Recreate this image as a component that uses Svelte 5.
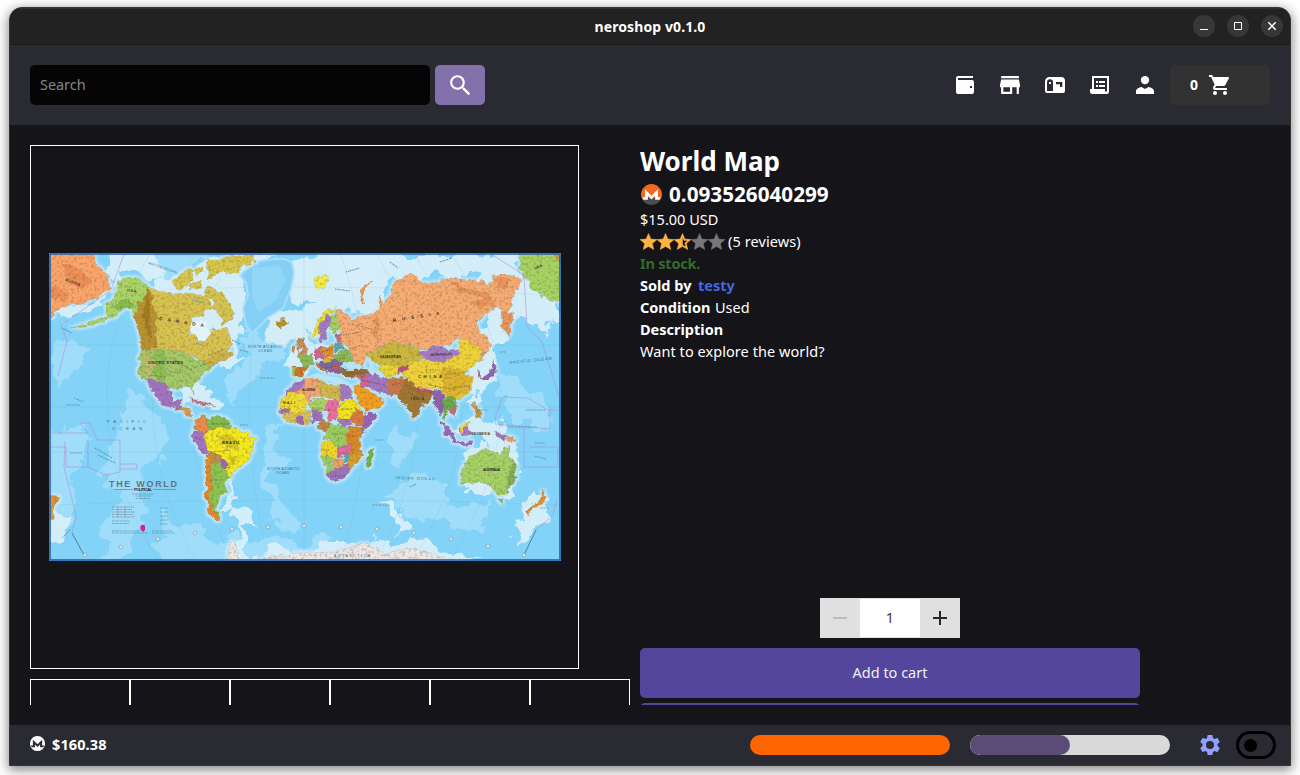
<script>
  const thumbs = [1, 2, 3, 4, 5, 6];
  let quantity = $state(1);
  const slider = 50;

  const star = 'M12 17.27L18.18 21L16.54 13.97L22 9.24L14.81 8.62L12 2L9.19 8.62L2 9.24L7.45 13.97L5.82 21Z';
  const starHalf = 'M12 15.4V6.1L13.71 10.13L18.09 10.5L14.77 13.39L15.76 17.67M22 9.24L14.81 8.63L12 2L9.19 8.63L2 9.24L7.45 13.97L5.82 21L12 17.27L18.18 21L16.54 13.97L22 9.24Z';
  const stars = [
    { d: star, fill: '#ffb344' },
    { d: star, fill: '#ffb344' },
    { d: starHalf, fill: '#ffb344' },
    { d: star, fill: '#777777' },
    { d: star, fill: '#777777' }
  ];

  const shallow = [
    'M110 248H150L165 275L150 286L138 276L115 282L104 305L85 315L60 322L50 318L60 305L98 298L110 285Z',
    'M165 276L205 262L250 250H275L240 275L246 300L245 330L236 350L240 362L222 366L232 345L226 328L205 345L190 330L193 318L170 294L152 288Z',
    'M292 262L330 250H520V275L535 290L562 302V322L540 328L512 318L500 345L490 370L470 385L480 350L478 325L495 305L505 280L440 282L395 285L378 310L345 312L325 305L300 300L290 285Z',
    'M262 318L300 305L335 305L320 330L300 335L285 345L265 335Z',
    'M292 335L312 335L325 345L335 360L300 368L290 360Z',
    'M218 512L250 508L262 520L240 528L228 560H245L250 535L225 505L232 470L226 478Z',
    'M445 425L475 442L520 450L515 440L500 425L470 420Z',
    'M462 452L512 440L522 470L508 500L490 498L480 488L461 488Z',
    'M385 500L395 505L408 525L398 535Z',
    'M538 490L552 500L540 530L510 540L525 515Z',
    'M40 512L75 515L58 540H40Z',
    'M178 384H200L218 402L216 408L185 404Z',
    'M478 365L500 350L498 385L470 400L465 385Z',
    'M240 565L270 552L330 545L370 537L440 548L480 565Z'
  ];
  const currents = [
    'M130 390L160 420L165 450L140 480L150 510L120 565H95L118 500L100 470L120 430Z',
    'M160 510L200 530L260 545L330 535L300 565H160Z',
    'M285 405L275 430L290 460L270 480L295 520L280 535L262 490L265 440Z',
    'M390 490L430 470L455 500L490 505L480 530L430 525L400 510Z',
    'M400 425L408 445L398 470L394 440Z',
    'M500 370L540 385L555 420L520 425L500 400Z',
    'M225 375L265 345L285 340L250 385L232 405Z',
    'M50 340L60 335L90 345L72 375L55 385Z',
    'M140 248H215L180 270L165 284L150 272ZM40 425L90 430L75 470L80 520L60 535L40 500Z',
    'M325 248L370 248L382 270L355 300L338 306Z',
    'M245 330L270 335L285 360L250 365Z'
  ];

  const land = [
    ['#fca56b', 'M40 244H88L96 262L107 274L109 287L98 297L80 303L60 308L55 315L40 322Z'],
    ['#f08f56', 'M62 262L80 270L92 283L84 288L66 278ZM50 285L70 294L62 300L48 297Z'],
    ['#a9d566', 'M118 282L137 277L152 288L143 298L136 315L128 307L113 317L93 325L70 328L90 323L107 316L104 305L115 298Z'],
    ['#86bd50', 'M112 308L124 300L134 303L132 308L120 309Z'],
    ['#d8c350', 'M152 288L173 295L187 292L207 298L213 308L193 320L190 330L200 342L206 340L213 328L227 328L233 345L220 355L203 362L197 358L183 352L143 348L140 338L135 313L143 298Z'],
    ['#bb932f', 'M150 288L153 302L157 318L156 347L143 348L140 335L135 313L143 298Z'],
    ['#a57a1f', 'M147 293L151 303L149 322L153 340L147 334L143 312Z'],
    ['#d9c74c', 'M172 283L187 270L195 271L192 280L180 290ZM205 262L227 257L253 255L255 260L237 272L228 276L222 272L209 278ZM188 284L200 281L203 287L190 290ZM196 268L202 266L203 273L197 276Z'],
    ['#d6c452', 'M207 286L222 292L232 305L232 318L223 325L219 315L210 310L216 302L203 296Z'],
    ['#a3c969', 'M143 348L183 352L197 360L213 358L226 351L233 353L213 367L200 378L193 388L195 395L190 387L168 388L165 383L147 380L138 373L140 358Z'],
    ['#8dbf55', 'M156 349H162L168 375L160 383L154 370Z'],
    ['#bfc06a', 'M143 355L152 352L154 375L146 374Z'],
    ['#d0b348', 'M203 362L226 350L235 354L222 361L208 368Z'],
    ['#a273c6', 'M145 380L165 383L170 392L172 402L182 400L182 407L172 409L160 402L153 391Z'],
    ['#d79a47', 'M178 405L187 409L194 417L187 416Z'],
    ['#c66f95', 'M188 398L203 401L216 407L207 406Z'],
    ['#b9962d', 'M275 321L285 319L289 324L281 328Z'],
    ['#f7ef3c', 'M314 278L322 276L328 278L324 286L317 290Z'],
    ['#e98c4d', 'M195 420L202 415L210 418L211 428L203 437L194 430Z'],
    ['#86bd4c', 'M205 417L225 418L234 426L229 432L210 430Z'],
    ['#f5e91f', 'M203 436L217 426L240 430L255 438L253 447L247 463L237 467L230 479L224 466L214 455L203 444Z'],
    ['#dbc526', 'M218 436L234 437L238 446L228 448ZM228 455L238 457L233 466Z'],
    ['#a276c7', 'M192 434L202 430L206 443L209 455L203 452L192 442Z'],
    ['#c28f47', 'M209 450L220 455L224 462L213 466L208 459Z'],
    ['#8cc453', 'M211 462L222 463L230 479L224 483L227 492L218 500L217 512L221 518L212 514L209 500Z'],
    ['#9a68bd', 'M219 458H225L229 468L224 470Z'],
    ['#e58a2b', 'M206 454L211 462L210 500L216 515L222 519L216 521L209 513L206 495Z'],
    ['#f4a573', 'M295 388L304 380L320 378L321 394L308 401L295 394Z'],
    ['#a177c4', 'M290 387L304 379L302 387L285 396Z'],
    ['#f2dd33', 'M282 397L295 391L307 400L305 413L292 416L282 410Z'],
    ['#d9bf55', 'M281 411L296 414L309 412L312 423L297 425L286 420Z'],
    ['#9f68bb', 'M282 409L290 410L288 415L283 414ZM296 415L302 415L302 425L297 424Z'],
    ['#d2b84d', 'M319 379L330 385L340 385V401L321 395Z'],
    ['#a47bc7', 'M340 384L350 386L353 399H340Z'],
    ['#aad365', 'M309 402L323 396L327 402L322 413L311 413Z'],
    ['#ec6f9f', 'M327 400L339 401L337 419L329 421L325 411Z'],
    ['#f2e522', 'M339 400H355L360 408L352 419H338Z'],
    ['#9f70c2', 'M310 411L323 412L322 422L313 422Z'],
    ['#bd8749', 'M321 420L328 421L331 427L323 431L318 425Z'],
    ['#a672c5', 'M338 419L353 419L350 424L340 425Z'],
    ['#dc7a3f', 'M355 407L364 413L372 418L366 426H355L351 418Z'],
    ['#9763bb', 'M366 414L377 414L368 428L361 434L362 428Z'],
    ['#9bce60', 'M329 424L347 425L346 440L348 449H335L330 440L323 438Z'],
    ['#d98928', 'M348 425L363 428L360 438L362 455L350 454L346 440Z'],
    ['#f0d629', 'M321 440L333 442L338 450L335 459L321 457Z'],
    ['#e36aa2', 'M337 449L350 443L351 454L337 456Z'],
    ['#9dcb63', 'M321 457H334L333 474L327 473Z'],
    ['#e5a260', 'M335 458L343 457L344 467L334 470Z'],
    ['#49adaf', 'M343 455L351 453L350 463L344 463Z'],
    ['#d99e2d', 'M351 454L362 452L356 462L350 471L348 465Z'],
    ['#9d72c0', 'M327 474L335 470L344 465L350 466L349 474L338 481L330 480Z'],
    ['#72b747', 'M375 447L374 459L369 468L366 463L369 452Z'],
    ['#ca8c58', 'M296 341L302 337L304 345L307 354L298 356L301 350ZM293 346L297 345L296 351L293 351Z'],
    ['#cd7627', 'M293 366L308 367L304 377H294Z'],
    ['#9fc45a', 'M293 367L296 367L295 376L292 375Z'],
    ['#8bbb55', 'M298 356L311 354L314 365L305 368Z'],
    ['#f1e335', 'M312 337L319 318L328 309L337 310L326 316L320 334Z'],
    ['#a279c4', 'M319 341L320 325L327 314L332 320L327 329L326 338Z'],
    ['#a7cf69', 'M331 316L337 311L340 327L335 334L330 327Z'],
    ['#dc6191', 'M314 347L322 346L323 359L314 359Z'],
    ['#dd8f37', 'M322 348L334 345L336 355L323 357Z'],
    ['#57a9ae', 'M335 344L343 342L345 351L336 352Z'],
    ['#8bbb53', 'M335 354L349 351L355 361L344 363L334 362Z'],
    ['#7c66a5', 'M321 361L329 358L342 363L340 371L330 374L321 366Z'],
    ['#c05775', 'M332 366L340 364L341 369L334 371Z'],
    ['#d9b73e', 'M323 357L333 357L331 363L324 361Z'],
    ['#9b6c2c', 'M340 369L362 369L371 373L366 378L345 377Z'],
    ['#c2793d', 'M316 362L322 366L328 375L320 369Z'],
    ['#c86b86', 'M335 335L342 334L343 342L336 343Z'],
    ['#f7ac73', 'M337 310L350 315L348 320L367 315L378 310V297L383 305L390 295L395 282L410 273L417 277L420 283L440 282L450 278L477 280L490 285L493 275L513 275L523 280L513 295V305L508 315V335L502 325V308L493 307L477 322L480 333L488 337L492 345L482 360L473 350L460 338L443 346L422 348L393 342L368 352L365 368L355 360L344 343L340 332Z'],
    ['#ee9458', 'M450 280L460 287L485 293L492 300L478 296L458 292ZM376 316L380 325L377 345L373 328ZM505 310L512 315L509 336L503 325ZM470 302L486 299L496 304L480 308ZM492 278L510 279L505 290Z'],
    ['#ee9555', 'M371 282L365 288L362 297L365 304L361 301L360 291L365 284Z'],
    ['#cdb83e', 'M366 353L393 342L420 348L424 358L407 365L382 368L369 359Z'],
    ['#ead738', 'M379 365L397 363L397 376L388 378L380 372Z'],
    ['#a57bc6', 'M419 352L433 346L443 348L461 349L457 358L443 363L427 360Z'],
    ['#efd338', 'M397 372L411 362L423 360L443 363L461 352L459 341L465 338L480 348L482 359L467 370L463 372L473 378L470 392L460 400L443 398L440 388L417 388L408 379Z'],
    ['#dfb52e', 'M443 368L463 370L471 380L467 393L452 398L443 391Z'],
    ['#bd4d82', 'M396 367L408 364L410 370L399 374Z'],
    ['#a17633', 'M396 383L408 378L418 389L438 392L433 398L423 405L414 420L407 407L398 398Z'],
    ['#cf426a', 'M415 387L434 391L432 394L418 391Z'],
    ['#a377c6', 'M363 375L374 373L388 379L390 393L379 393L368 385Z'],
    ['#d3629d', 'M358 377L366 376L370 387L360 386Z'],
    ['#cc7949', 'M387 379L404 377L401 391L391 396Z'],
    ['#f39d22', 'M353 387L362 384L375 396L384 400L376 409L366 413L358 401Z'],
    ['#8f61b5', 'M434 391L441 389L444 402L440 416L435 403Z'],
    ['#6daa49', 'M441 400L452 396L458 407L455 416L447 411L445 421Z'],
    ['#d8618b', 'M449 410L456 407L455 415L450 415Z'],
    ['#9b68bc', 'M440 422L449 427L458 440L473 442L470 445L454 442L445 433Z'],
    ['#ad75c7', 'M458 430L468 425L470 435L461 436Z'],
    ['#f0d73a', 'M459 429L470 421L469 427L461 433Z'],
    ['#c69342', 'M473 402L478 407L482 418L476 418Z'],
    ['#a275be', 'M494 433L505 434L504 442Z'],
    ['#f0a06c', 'M504 434L517 441L509 444Z'],
    ['#9464b2', 'M482 377L491 372L494 361L497 368L493 376L484 381Z'],
    ['#c54e80', 'M477 369L482 374L480 377Z'],
    ['#a4d265', 'M463 462L473 455L485 448L497 450L500 457L506 445L512 460L517 467L515 480L507 493H496L488 483L473 482L461 485Z'],
    ['#82b44f', 'M512 462L517 468L514 482L507 492L509 480Z'],
    ['#87bd55', 'M498 499H503L501 505Z'],
    ['#e0942f', 'M543 490L547 497L541 503L528 515L525 513L539 501ZM52 494L58 497L54 507L53 520L48 521V500Z'],
    ['#a6d463', 'M518 244H570V306L547 299L533 288L520 272Z'],
    ['#c99a32', 'M545 244H570V276Z'],
    ['#ede8e8', 'M240 568L272 557L298 553L333 552L363 543L375 547L380 553L413 549L440 555L455 568ZM229 540L236 547L241 568H229Z']
  ];

  const labels = [
    [159, 320, 'C  A  N  A  D  A', 4.6, 45, 9, 'b'],
    [148, 364, 'UNITED STATES', 4, 35, 0, 'b'],
    [393, 322, 'R  U  S  S  I  A', 4.6, 47, -9, 'b'],
    [431, 356, 'MONGOLIA', 3.5, 21, -3, 'b'],
    [418, 378, 'C H I N A', 4, 24, 0, 'b'],
    [222, 444, 'BRAZIL', 4, 18, 0, 'b'],
    [483, 471, 'AUSTRALIA', 3.6, 17, 0, 'b'],
    [127, 291, 'U.S.A.', 3.5, 10, 8, 'b'],
    [65, 281, 'RUSSIA', 4, 16, 20, 'b'],
    [107, 423, 'P A C I F I C', 4.2, 39, 0, ''],
    [112, 430, 'O C E A N', 4.2, 30, 0, ''],
    [510, 364, 'PACIFIC OCEAN', 4.2, 42, -6, ''],
    [395, 479, 'INDIAN OCEAN', 4.2, 40, 2, ''],
    [248, 348, 'NORTH ATLANTIC', 3.4, 34, 0, ''],
    [258, 352, 'OCEAN', 3.4, 14, 0, ''],
    [267, 470, 'SOUTH ATLANTIC', 3.4, 33, 0, ''],
    [276, 474, 'OCEAN', 3.4, 13, 0, ''],
    [148, 264, 'ARCTIC OCEAN', 3.6, 30, 19, ''],
    [334, 557, 'ANTARCTICA', 3.4, 36, 0, ''],
    [380, 358, 'KAZAKHSTAN', 3, 21, 0, 'b'],
    [470, 435, 'INDONESIA', 3, 20, 0, 'b'],
    [411, 400, 'INDIA', 3.2, 13, 0, 'b'],
    [302, 391, 'ALGERIA', 3, 13, 0, 'b'],
    [283, 404, 'MALI', 3, 12, 0, 'b'],
    [535, 270, 'U.S.A.', 3.5, 9, -28, 'b']
  ];
  const markers = [[85,555],[121,547],[158,539],[195,533],[232,529],[268,527],[304,526],[341,527],[377,529],[414,533],[451,539],[488,546],[524,555]];
</script>

{#snippet monero(size, top, bottom, mark)}
  <svg width={size} height={size} viewBox="1 1 22 22">
    <path d="M12 1A11 11 0 0 0 1.6 15.5H22.4A11 11 0 0 0 12 1Z" fill={top} />
    <path d="M1.6 15.5A11 11 0 0 0 22.4 15.5Z" fill={bottom} />
    <path d="M5.2 6.6L12 13.2L18.8 6.6V14.8H21.8L20.6 17.6H15.8V13.4L12 17.2L8.2 13.4V17.6H3.4L2.2 14.8H5.2Z" fill={mark} />
  </svg>
{/snippet}

<div class="desktop">
  <div class="window">
    <div class="titlebar">
      <span></span>
      <h1>neroshop v0.1.0</h1>
      <div class="controls">
        <button aria-label="Minimize"><svg width="22" height="22"><path d="M7 14.5H15" /></svg></button>
        <button aria-label="Maximize"><svg width="22" height="22"><path d="M7.5 7.5H14.5V14.5H7.5Z" /></svg></button>
        <button aria-label="Close"><svg width="22" height="22"><path d="M7.3 7.3L14.7 14.7M14.7 7.3L7.3 14.7" stroke-width="1.5" /></svg></button>
      </div>
    </div>

    <header>
      <div class="search">Search</div>
      <button class="find" aria-label="Find">
        <svg width="22" height="22" viewBox="2 2 19.5 19.5" fill="#fff"><path d="M9.5,3A6.5,6.5 0 0,1 16,9.5C16,11.11 15.41,12.59 14.44,13.73L14.71,14H15.5L20.2,18.7Q20.9,19.4 20.2,20.2Q19.4,20.9 18.6,20.2L14,15.5V14.71L13.73,14.44C12.59,15.41 11.11,16 9.5,16A6.5,6.5 0 0,1 3,9.5A6.5,6.5 0 0,1 9.5,3M9.5,4.9C7,4.9 4.9,7 4.9,9.5C4.9,12 7,14.1 9.5,14.1C12,14.1 14.1,12 14.1,9.5C14.1,7 12,4.9 9.5,4.9Z" /></svg>
      </button>
      <nav>
        <svg viewBox="0 0 24 24"><path fill-rule="evenodd" d="M5 3H20V5H5V7H19a2 2 0 0 1 2 2V19a2 2 0 0 1-2 2H5a2 2 0 0 1-2-2V5a2 2 0 0 1 2-2ZM17 13V15H19V13Z" /></svg>
        <svg viewBox="1.2 1.2 21.6 21.6"><path d="M12,18H6V14H12M21,14V12L20,7H4L3,12V14H4V20H14V14H18V20H20V14M20,4H4V6H20V4Z" /></svg>
        <svg viewBox="0 0 24 24"><path fill-rule="evenodd" d="M6.5 4H18a4 4 0 0 1 4 4V18a2 2 0 0 1-2 2H4a2 2 0 0 1-2-2V8.5A4.5 4.5 0 0 1 6.5 4ZM7 6.3A3 3 0 0 0 4 9.3V18H10V9.3A3 3 0 0 0 7 6.3ZM6 9H8V11H6ZM13 9V11.2H17V14H19.3V9Z" /></svg>
        <svg viewBox="0 0 24 24"><path fill-rule="evenodd" d="M4 3H21V18.5A2.5 2.5 0 0 1 18.5 21H4.5A2.5 2.5 0 0 1 2 18.5V16H4ZM6 5V16H17V18.5H19V5Z" /><path d="M8 8H10V10H8ZM11 8H17V10H11ZM8 12H10V14H8ZM11 12H17V14H11Z" /></svg>
        <svg viewBox="0 0 24 24"><circle cx="12" cy="7.1" r="4.2" /><path d="M3 21V18.5C3 16 5.7 14.6 8.5 14.1L12 16L15.5 14.1C18.3 14.6 21 16 21 18.5V21Z" /></svg>
      </nav>
      <button class="cart">
        <b>0</b>
        <svg width="24" height="24" viewBox="0 0 24 24" fill="#fff"><path d="M17,18C15.89,18 15,18.89 15,20A2,2 0 0,0 17,22A2,2 0 0,0 19,20C19,18.89 18.1,18 17,18M1,2V4H3L6.6,11.59L5.24,14.04C5.09,14.32 5,14.65 5,15A2,2 0 0,0 7,17H19V15H7.42A0.25,0.25 0 0,1 7.17,14.75C7.17,14.7 7.18,14.66 7.2,14.63L8.1,13H15.55C16.3,13 16.96,12.58 17.3,11.97L20.88,5.5C20.95,5.34 21,5.17 21,5A1,1 0 0,0 20,4H5.21L4.27,2M7,18C5.89,18 5,18.89 5,20A2,2 0 0,0 7,22A2,2 0 0,0 9,20C9,18.89 8.1,18 7,18Z" /></svg>
      </button>
    </header>

    <main>
      <div class="gallery">
        <div class="frame">
          <svg class="map" width="512" height="308" viewBox="49 253 512 308">
            <defs>
              <filter id="coast" filterUnits="userSpaceOnUse" x="39" y="243" width="532" height="328" color-interpolation-filters="sRGB">
                <feTurbulence type="fractalNoise" baseFrequency="0.13" numOctaves="4" seed="4" result="n" />
                <feDisplacementMap in="SourceGraphic" in2="n" scale="8" xChannelSelector="R" yChannelSelector="G" result="d" />
                <feMorphology in="d" operator="dilate" radius="2" result="grown" />
                <feGaussianBlur in="grown" stdDeviation="1.2" result="soft" />
                <feFlood flood-color="#d6edf8" flood-opacity=".7" />
                <feComposite in2="soft" operator="in" result="shelf" />
                <feTurbulence type="fractalNoise" baseFrequency="0.35" numOctaves="3" seed="11" />
                <feColorMatrix values="0 0 0 0 0.42  0 0 0 0 0.36  0 0 0 0 0.22  3 0 0 0 -1.4" />
                <feComponentTransfer><feFuncA type="linear" slope=".34" /></feComponentTransfer>
                <feComposite in2="d" operator="in" result="relief" />
                <feMerge><feMergeNode in="shelf" /><feMergeNode in="d" /><feMergeNode in="relief" /></feMerge>
              </filter>
              <filter id="sea" filterUnits="userSpaceOnUse" x="39" y="243" width="532" height="328" color-interpolation-filters="sRGB">
                <feTurbulence type="fractalNoise" baseFrequency="0.045" numOctaves="4" seed="7" result="n" />
                <feDisplacementMap in="SourceGraphic" in2="n" scale="34" xChannelSelector="R" yChannelSelector="G" />
              </filter>
            </defs>
            <rect x="49" y="253" width="512" height="308" fill="#83d2f8" />
            <g fill="#a0ddfa" filter="url(#sea)">{#each currents as d}<path {d} />{/each}</g>
            <g fill="#dcf0fa" opacity=".9" filter="url(#sea)">{#each shallow as d}<path {d} />{/each}</g>
            <g fill="none" stroke="#59bba9" stroke-width=".4" opacity=".4">
              <path d="M50 296Q305 278 560 296M50 345H560M50 407H560M50 452H560M50 505Q305 495 560 505M304 254V560M268 254Q230 400 268 560M232 254Q150 400 232 560M195 254Q110 400 195 560M150 254Q60 400 158 560M341 254Q390 400 341 560M377 254Q460 400 377 560M414 254Q510 400 414 560M451 254Q550 400 451 560" />
            </g>
            <path d="M248 268L255 262L273 259L285 259L292 263L294 274L291 288L283 308L267 318L260 326L252 333L246 325L243 308L248 295L246 283L240 275Z" fill="#84cff5" stroke="#a7dff8" stroke-width="2" />
            <path d="M252 268L280 266L286 280L276 300L258 312L252 295Z" fill="#92d7f8" />
            <g filter="url(#coast)">{#each land as [fill, d]}<path {d} {fill} stroke="#76705a" stroke-opacity=".35" stroke-width=".5" />{/each}</g>
            <path d="M191 323L200 320L207 321L206 328L211 333L205 341L199 340L196 335L190 331Z" fill="#e4f3fb" />
            <path d="M367 360L371 358L372 364L376 369L373 376L369 372L370 366ZM345 366L350 362L354 365L360 364L362 368L350 369ZM310 375L318 373L327 376L338 377L350 383L340 384L330 381L320 379Z" fill="#b9e4f6" />
            <g fill="none" stroke="#b18bd0" stroke-width=".7" opacity=".8">
              <path d="M124 254L111 290L61 325L67 341L58 376M51 433H88L80 423H90L97 440H120V472L106 475L88 467V441M50 447H66V467H88M120 464H137V469H121M65 441L64 467L76 515L72 533" />
              <path d="M491 254L524 275L527 326L542 342L560 400M503 397L528 398L548 410H558M503 397L496 414L495 424L550 429V407M524 427V467H558V447H530M557 500L553 515L536 530" />
            </g>
            <path d="M72 533L84 555M536 530L524 555" stroke="#3c5e71" stroke-width=".7" fill="none" />
            <path d="M66 405H80M74 398L84 402M70 453H82M95 448L112 458M98 455L115 463M62 328L72 333M205 408H212M240 425H248M192 300L205 303M440 262L452 258M390 262L398 268M346 272L360 268M335 289L350 291M500 352H506M508 427H537M526 410H545M475 410H488M535 443H545M535 456L546 459M410 487L416 484M375 440H383M372 505H390M505 477H515M540 508H549M355 455L362 453M480 355L486 352M196 343L205 346M232 340L240 344M260 378H274M240 350L248 352M70 530L62 538" stroke="#5e93a5" stroke-width="1.1" stroke-dasharray="1.4 .8 .8 .6" fill="none" />
            <path d="M208 355L224 350M170 372H185M200 366L212 362M150 375L165 377M174 360L192 370M330 360L345 358M322 352L332 349M345 350L362 345M343 335L362 332M352 324L375 330M325 368L338 366M346 373H365M360 380L385 385M392 385L402 383M405 385L424 395M408 392L420 400M430 385L455 390M445 375L466 372M452 388L468 386M425 370H440M312 408H322M328 410H336M341 409H352M332 434H343M323 450H330M348 436H358M338 453H348M330 476H345M212 424H230M214 452L230 450M211 480H222M195 437L203 441" stroke="#50462e" stroke-opacity=".6" stroke-width="1" stroke-dasharray="1.6 1 .8 1.3" fill="none" />
            {#each markers as [cx, cy]}<circle {cx} {cy} r="1.8" fill="#d9e6ea" stroke="#79939f" stroke-width=".5" />{/each}
            {#each labels as [x, y, text, size, length, angle, weight]}
              <text {x} {y} font-size={size} textLength={length} transform={`rotate(${angle} ${x} ${y})`} class:strong={weight === 'b'}>{text}</text>
            {/each}
            <text class="world" x="109" y="486.5" font-size="9" textLength="68">THE WORLD</text>
            <path d="M114 489.5H133M153 489.5H176" stroke="#547a8c" stroke-width=".6" />
            <text class="strong" x="134" y="491" font-size="4.2" textLength="18">POLITICAL</text>
            <g stroke="#4e7587" stroke-width=".7" stroke-dasharray="2 .6 1 .5">
              <path d="M132 494H154M135 496H151M136 498.5H150M112 507H134M112 509.5H132M112 512H135M112 514.5H133M112 517H134M112 521H130M112 523.5H129M112 531H140M112 533H148M152 531H172M152 533H175M160 508H168M160 512H168M160 516H168M160 520H168M160 524H168" opacity=".75" fill="none" />
            </g>
            <path d="M118 506V518M125 506V518" stroke="#d85d60" stroke-width=".8" stroke-dasharray="1 .7" />
            <path d="M140.5 526Q143 523.5 145 526V530L143 532L140.5 529Z" fill="#d42286" />
            <rect x="50" y="254" width="510" height="306" fill="none" stroke="#1e62b3" stroke-width="1.6" />
          </svg>
        </div>
        <div class="thumbs">{#each thumbs as t (t)}<div class="thumb"></div>{/each}</div>
      </div>

      <section class="product">
        <h2>World Map</h2>
        <div class="price">{@render monero(21, '#f26822', '#4d4d4d', '#ffffff')}<b>0.093526040299</b></div>
        <div class="row usd">$15.00 USD</div>
        <div class="row rating">
          <div class="stars">{#each stars as s}<svg width="17" height="17" viewBox="2 1.5 20 20"><path d={s.d} fill={s.fill} stroke={s.fill} stroke-width=".6" stroke-linejoin="round" /></svg>{/each}</div>
          <span class="reviews">(5 reviews)</span>
        </div>
        <div class="row stock">In stock.</div>
        <div class="row"><b class="sold">Sold by</b><b class="seller">testy</b></div>
        <div class="row"><b class="cond">Condition</b><span class="used">Used</span></div>
        <div class="row"><b class="desc">Description</b></div>
        <div class="row about">Want to explore the world?</div>
        <div class="actions">
          <div class="stepper">
            <button aria-label="Decrease" disabled={quantity <= 1} onclick={() => quantity--}><svg width="14" height="14"><path d="M0 7H14" /></svg></button>
            <span>{quantity}</span>
            <button aria-label="Increase" onclick={() => quantity++}><svg width="14" height="14"><path d="M0 7H14M7 0V14" /></svg></button>
          </div>
          <button class="add"><span>Add to cart</span></button>
          <button class="add" aria-label="More"></button>
        </div>
      </section>
    </main>

    <footer>
      <div class="coin">{@render monero(15, '#ffffff', '#ffffff', '#2a2a33')}</div>
      <b class="rate">$160.38</b>
      <div class="progress"></div>
      <div class="slider"><div style={`width:${slider}%`}></div></div>
      <svg class="cog" width="24" height="24" viewBox="0 0 24 24"><path d="M12,16A4,4 0 0,1 8,12A4,4 0 0,1 12,8A4,4 0 0,1 16,12A4,4 0 0,1 12,16M19.43,12.97C19.47,12.65 19.5,12.33 19.5,12C19.5,11.67 19.47,11.34 19.43,11L21.54,9.37C21.73,9.22 21.78,8.95 21.66,8.73L19.66,5.27C19.54,5.05 19.27,4.96 19.05,5.05L16.56,6.05C16.04,5.66 15.5,5.32 14.87,5.07L14.5,2.42C14.46,2.18 14.25,2 14,2H10C9.75,2 9.54,2.18 9.5,2.42L9.13,5.07C8.5,5.32 7.96,5.66 7.44,6.05L4.95,5.05C4.73,4.96 4.46,5.05 4.34,5.27L2.34,8.73C2.21,8.95 2.27,9.22 2.46,9.37L4.57,11C4.53,11.34 4.5,11.67 4.5,12C4.5,12.33 4.53,12.65 4.57,12.97L2.46,14.63C2.27,14.78 2.21,15.05 2.34,15.27L4.34,18.73C4.46,18.95 4.73,19.03 4.95,18.95L7.44,17.94C7.96,18.34 8.5,18.68 9.13,18.93L9.5,21.58C9.54,21.82 9.75,22 10,22H14C14.25,22 14.46,21.82 14.5,21.58L14.87,18.93C15.5,18.67 16.04,18.34 16.56,17.94L19.05,18.95C19.27,19.03 19.54,18.95 19.66,18.73L21.66,15.27C21.78,15.05 21.73,14.78 21.54,14.63L19.43,12.97Z" fill="#8fa0ff" /></svg>
      <div class="toggle"><i></i></div>
    </footer>
  </div>
</div>

<style>
  :global(body) { margin: 0; background: #fff; overflow: hidden; }
  .desktop { box-sizing: border-box; height: 775px; padding: 7px 9px 9px; background: #fff; font-family: "Noto Sans", "Open Sans", sans-serif; font-size: 14.5px; color: #fff; }
  .desktop * { box-sizing: border-box; }
  button { border: 0; padding: 0; font: inherit; color: inherit; display: flex; align-items: center; justify-content: center; }
  svg { display: block; flex: none; }
  .window { height: 759px; border: 1px solid #35353a; border-radius: 13px 13px 0 0; overflow: hidden; background: #151419; box-shadow: 0 3px 12px 1px rgba(0, 0, 0, .48); display: flex; flex-direction: column; }
  .titlebar { height: 37px; flex: none; background: #222; border-top: 1px solid #303030; border-bottom: 1px solid #19191b; display: grid; grid-template-columns: 1fr auto 1fr; align-items: center; padding: 0 7px; }
  h1 { margin: 0; font-size: 14px; line-height: 20px; letter-spacing: .1px; }
  .controls { display: flex; gap: 12px; justify-content: flex-end; padding-bottom: 1px; }
  .controls button { width: 22px; height: 22px; border-radius: 50%; background: #373737; }
  .controls path { fill: none; stroke: #fff; }
  header { height: 80px; flex: none; background: #2a2a33; display: flex; align-items: center; padding: 0 20px; }
  .search { width: 400px; height: 40px; border-radius: 5px; background: #050505; color: #858585; padding-left: 10px; line-height: 40px; font-size: 14.4px; }
  .find { width: 50px; height: 40px; margin-left: 5px; border-radius: 5px; background: #8371ab; }
  nav { display: flex; gap: 21px; margin-left: auto; margin-right: 13px; }
  nav svg { width: 24px; height: 24px; fill: #fff; }
  .cart { width: 100px; height: 40px; border-radius: 5px; background: #323232; justify-content: flex-start; padding-left: 20px; gap: 10px; }
  .cart b { font-size: 14px; width: 8px; margin-top: -1px; }
  main { height: 600px; flex: none; padding: 20px; display: flex; gap: 10px; }
  .gallery { width: 600px; height: 560px; overflow: hidden; }
  .frame { width: 549px; height: 524px; border: 1px solid #fff; display: flex; justify-content: center; align-items: center; }
  .map text { font-family: "Liberation Sans", sans-serif; fill: #3c6d8c; }
  .map text.strong { font-weight: bold; fill: #342f26; }
  .map text.world { font-weight: bold; fill: #64737d; }
  .thumbs { display: flex; margin-top: 10px; }
  .thumb { width: 100px; height: 100px; border: 1px solid #fff; }
  .product { width: 500px; height: 563px; margin-top: -3px; flex: none; overflow: hidden; display: flex; flex-direction: column; }
  h2 { margin: 0; height: 37px; line-height: 38px; font-size: 26px; flex: none; }
  .price { height: 30px; flex: none; display: flex; align-items: center; gap: 7px; padding-left: 1px; font-size: 20.7px; line-height: 30px; }
  .row { height: 22px; flex: none; line-height: 20px; display: flex; align-items: flex-start; white-space: nowrap; }
  .stars { display: flex; width: 88px; padding-top: 2px; }
  .reviews { letter-spacing: .1px; }
  .stock { color: #326b2c; font-weight: bold; letter-spacing: -.2px; }
  .sold { width: 58px; }
  .seller { color: #4169e1; }
  .cond { width: 75px; }
  .about { letter-spacing: .06px; }
  .actions { margin-top: auto; height: 107px; flex: none; display: flex; flex-direction: column; align-items: center; }
  .stepper { width: 140px; height: 40px; flex: none; display: flex; background: #e0e0e0; margin-bottom: 10px; }
  .stepper button { width: 40px; height: 40px; background: #e0e0e0; }
  .stepper path { stroke: #26282a; stroke-width: 2; }
  .stepper button:disabled path { stroke: #bdbdbd; }
  .stepper span { width: 60px; height: 38px; margin: 1px 0; background: #fff; color: #353637; text-align: center; line-height: 37px; }
  .add { width: 500px; height: 50px; flex: none; border-radius: 5px; background: #53469c; margin-bottom: 5px; color: #f0eef8; }
  .add span { padding-bottom: 2px; }
  footer { height: 40px; flex: none; background: #2a2a33; display: flex; align-items: center; padding: 0 14px 0 20px; }
  .coin { padding-bottom: 3px; }
  .rate { margin-left: 7px; padding-bottom: 2px; letter-spacing: .1px; }
  .progress { width: 200px; height: 20px; border-radius: 10px; background: #ff6600; margin-left: auto; }
  .slider { width: 200px; height: 20px; border-radius: 10px; background: #d9d9d9; margin-left: 20px; overflow: hidden; }
  .slider div { height: 20px; border-radius: 10px; background: #5a4c77; }
  .cog { margin-left: 28px; }
  .toggle { width: 40px; height: 28px; border: 3px solid #000; border-radius: 14px; margin-left: 14px; display: flex; align-items: center; padding-left: 5px; }
  .toggle i { width: 13px; height: 13px; border-radius: 50%; background: #000; }
</style>
